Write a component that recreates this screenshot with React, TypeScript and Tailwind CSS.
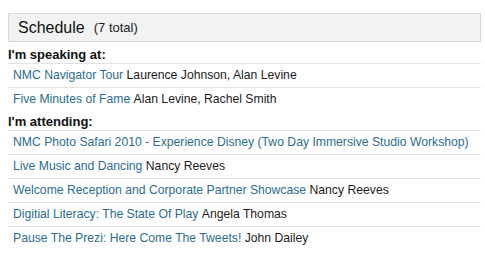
import React from "react";

type Row = { title: string; people?: string };

const speaking: Row[] = [
  { title: "NMC Navigator Tour", people: "Laurence Johnson, Alan Levine" },
  { title: "Five Minutes of Fame", people: "Alan Levine, Rachel Smith" },
];

const attending: Row[] = [
  { title: "NMC Photo Safari 2010 - Experience Disney (Two Day Immersive Studio Workshop)" },
  { title: "Live Music and Dancing", people: "Nancy Reeves" },
  { title: "Welcome Reception and Corporate Partner Showcase", people: "Nancy Reeves" },
  { title: "Digitial Literacy: The State Of Play", people: "Angela Thomas" },
  { title: "Pause The Prezi: Here Come The Tweets!", people: "John Dailey" },
];

function Rows({ rows }: { rows: Row[] }) {
  return (
    <ul>
      {rows.map((r) => (
        <li
          key={r.title}
          className="h-[24px] border-t border-[#e2e2e2] pl-[5px] flex items-center text-[12.2px] whitespace-nowrap"
        >
          <a className="text-[#2b6d8d]" href="#">
            {r.title}
          </a>
          {r.people && <span className="text-[#1c1c1c]">&nbsp;{r.people}</span>}
        </li>
      ))}
    </ul>
  );
}

export default function App() {
  return (
    <div
      className="w-[485px] h-[261px] bg-white pt-[13px] pl-[8px]"
      style={{ fontFamily: '"Liberation Sans", Arial, sans-serif' }}
    >
      <div className="w-[473px]">
        <div className="h-[29px] border border-[#d8d8d8] bg-[#f2f2f2] flex items-center pl-[9px]">
          <span className="text-[16px] text-[#111]">Schedule</span>
          <span className="text-[13px] text-[#222] ml-[9px]">(7 total)</span>
        </div>
        <div className="mt-[2px] h-[19px] pt-[2px] leading-[17px] text-[13px] font-bold text-[#111]">
          I'm speaking at:
        </div>
        <Rows rows={speaking} />
        <div className="h-[19px] pt-[2px] leading-[17px] text-[13px] font-bold text-[#111]">
          I'm attending:
        </div>
        <Rows rows={attending} />
      </div>
    </div>
  );
}
